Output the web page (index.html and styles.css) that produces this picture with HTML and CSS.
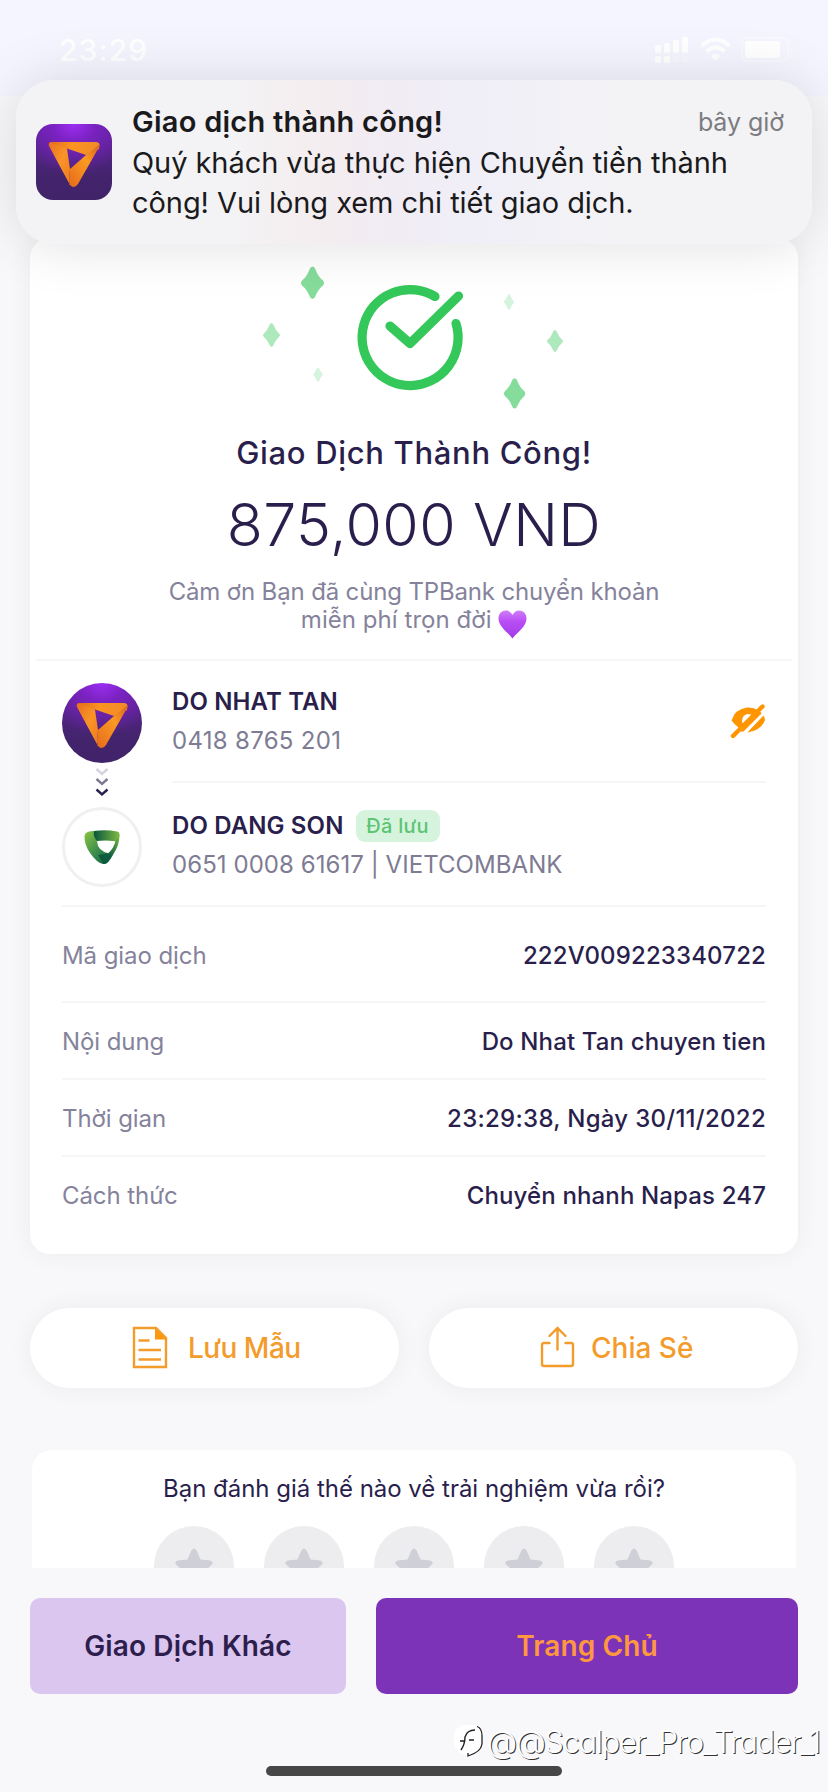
FILE: index.html
```html
<!DOCTYPE html>
<html lang="vi">
<head>
<meta charset="utf-8">
<title>Giao Dịch Thành Công</title>
<link rel="stylesheet" href="styles.css">
</head>
<body>
<svg class="defs" width="0" height="0" aria-hidden="true">
  <defs>
    <linearGradient id="o1" x1="0" y1="0" x2="1" y2="0"><stop offset="0" stop-color="#e0661d"/><stop offset=".45" stop-color="#fb9420"/><stop offset="1" stop-color="#f18a28"/></linearGradient>
    <linearGradient id="o2" x1="0" y1="0" x2="1" y2="1"><stop offset="0" stop-color="#e86f1e"/><stop offset=".5" stop-color="#fa9426"/><stop offset="1" stop-color="#ee7a20"/></linearGradient>
    <linearGradient id="o3" x1="1" y1="0" x2="0" y2="1"><stop offset="0" stop-color="#d9601f"/><stop offset=".4" stop-color="#fb9a22"/><stop offset="1" stop-color="#e56a1c"/></linearGradient>
    <linearGradient id="g1" x1="0" y1="0" x2="1" y2="1"><stop offset="0" stop-color="#8cc641"/><stop offset=".5" stop-color="#3f8f4c"/><stop offset="1" stop-color="#0a5a40"/></linearGradient>
    <linearGradient id="g2" x1="0" y1="0" x2="1" y2="0"><stop offset="0" stop-color="#07553c"/><stop offset="1" stop-color="#7fbb42"/></linearGradient>
    <linearGradient id="g3" x1="1" y1="0" x2="0" y2="1"><stop offset="0" stop-color="#7fbb42"/><stop offset=".6" stop-color="#0d5d40"/><stop offset="1" stop-color="#0a5a40"/></linearGradient>
    <symbol id="tp" viewBox="0 0 52 46">
      <path d="M1 4Q0 1 3.500 1H48Q51 1 51.500 3.500L51 8L38 14L19 7.500Z" fill="url(#o1)"/>
      <path d="M1 5Q0 1.500 3 1.500L19 7.500L22 28L21 43Q21 44 22 44Z" fill="url(#o2)"/>
      <path d="M51.500 3.500Q51.500 5 50.500 7L30 43Q27 47.500 23 45Q21 43 21 40L22 28L38 14Z" fill="url(#o3)"/>
    </symbol>
    <symbol id="star" viewBox="0 0 40 38"><path d="M20 1.500Q21.800 1.500 22.800 4L26.500 12.500L36 13.500Q40 14.500 38 17.500L30 24.500L32.500 34Q33 37.500 29 36.500L20 31.500L11 36.500Q7 37.500 7.500 34L10 24.500L2 17.500Q0 14.500 4 13.500L13.500 12.500L17.200 4Q18.200 1.500 20 1.500Z" fill="#cecfd7"/></symbol>
  </defs>
</svg>
<div class="screen">
  <header class="status">
    <span class="clock">23:29</span>
    <svg class="signals" width="146" height="30" viewBox="0 0 146 30" fill="#fff">
      <g><rect x="1" y="9" width="6" height="8" rx="1.500"/><rect x="10" y="7" width="6" height="10" rx="1.500"/><rect x="19" y="4" width="6" height="13" rx="1.500"/><rect x="28" y="1" width="6" height="16" rx="1.500"/><rect x="1" y="20" width="6" height="7" rx="1.500"/><rect x="10" y="20" width="6" height="7" rx="1.500"/><rect x="19" y="20" width="6" height="7" rx="1.500" opacity=".25"/><rect x="28" y="20" width="6" height="7" rx="1.500" opacity=".25"/></g>
      <g fill="none" stroke="#fff" stroke-width="4"><path d="M47.500 10Q61.500 -3 75.500 10"/><path d="M52.500 15.500Q61.500 7.500 70.500 15.500"/></g>
      <path d="M56.500 20Q61.500 16 66.500 20L61.500 25Z"/>
      <rect x="88" y="2" width="46" height="23" rx="6" fill="none" stroke="#fff" stroke-width="2" opacity=".35"/><rect x="91" y="5" width="35" height="17" rx="3"/><path d="M137 10Q140 13.500 137 17Z" opacity=".35"/>
    </svg>
  </header>

  <section class="notice">
    <div class="app-icon"><svg width="52" height="46"><use href="#tp"/></svg></div>
    <div class="notice-text">
      <div class="notice-head"><strong>Giao dịch thành công!</strong><time>bây giờ</time></div>
      <p>Quý khách vừa thực hiện Chuyển tiền thành<br>công! Vui lòng xem chi tiết giao dịch.</p>
    </div>
  </section>

  <main>
    <section class="card">
      <div class="hero">
        <svg class="success" width="390" height="160" viewBox="0 20 390 160">
          <g fill="none" stroke="#34c759" stroke-width="9.200" stroke-linecap="round" stroke-linejoin="round">
            <path d="M215 56.500A48 48 0 1 0 236 83.500"/><path d="M170 86L190 103.500L238.500 56"/>
          </g>
          <g fill="#86dc9a"><path d="M92.500 66.500Q94.500 66.500 95.500 69.500Q98 76.500 103 80.500Q105 83 103 85.500Q98 89.500 95.500 96Q94.500 99 92.500 99Q90.500 99 89.500 96Q87 89.500 82 85.500Q80 83 82 80.500Q87 76.500 89.500 69.500Q90.500 66.500 92.500 66.500Z" transform="translate(0 -40)"/>
          <path transform="translate(208.600 115.900) scale(.93)" d="M92.500 24Q94.500 24 95.500 27Q98 34 103 38Q105 40.500 103 43Q98 47 95.500 53.500Q94.500 56.500 92.500 56.500Q90.500 56.500 89.500 53.500Q87 47 82 43Q80 40.500 82 38Q87 34 89.500 27Q90.500 24 92.500 24Z"/></g>
          <g fill="#aee8bd"><path d="M51.500 83Q53 83 54 86Q56 91 59 93.500Q61 95 59 97Q56 99.500 54 104Q53 107 51.500 107Q50 107 49 104Q47 99.500 44 97Q42 95 44 93.500Q47 91 49 86Q50 83 51.500 83Z"/><path d="M335 90Q336.500 90 337.500 93Q339 97 342 99.500Q344 101 342 103Q339 105.500 337.500 109Q336.500 112 335 112Q333.500 112 332.500 109Q331 105.500 328 103Q326 101 328 99.500Q331 97 332.500 93Q333.500 90 335 90Z"/></g>
          <g fill="#d6f4dd"><path d="M69 54Q70 54 71 57Q72.500 60 74.500 62Q72.500 64 71 67Q70 70 69 70Q68 70 67 67Q65.500 64 63.500 62Q65.500 60 67 57Q68 54 69 54Z" transform="translate(220 0)"/><path d="M98 127.500Q99 127.500 100 130Q101 132.500 103 134.500Q101 136.500 100 139Q99 142 98 142Q97 142 96 139Q95 136.500 93 134.500Q95 132.500 96 130Q97 127.500 98 127.500Z"/></g>
        </svg>
        <h1>Giao Dịch Thành Công!</h1>
        <div class="amount">875,000 VND</div>
        <p class="thanks">Cảm ơn Bạn đã cùng TPBank chuyển khoản<br><span class="second">miễn phí trọn đời</span>
          <svg class="heart" width="29" height="29" viewBox="0 0 28 29"><defs><linearGradient id="h" x1="0" y1="0" x2="0" y2="1"><stop offset="0" stop-color="#d07df8"/><stop offset=".4" stop-color="#b84df5"/><stop offset="1" stop-color="#a23ce6"/></linearGradient></defs><path d="M14 28.500C9 22 0 16.500 0 8.500C0 0 10 -2.500 14 5C18 -2.500 28 0 28 8.500C28 16.500 19 22 14 28.500Z" fill="url(#h)"/></svg></p>
      </div>

      <div class="transfer">
        <div class="route">
          <div class="avatar tp"><svg width="52" height="46"><use href="#tp"/></svg></div>
          <svg class="chevrons" width="14" height="30" viewBox="0 0 14 30" fill="none" stroke-width="2.400"><path d="M1.500 1L7 6L12.500 1" stroke="#d5d4de"/><path d="M1.500 11L7 16L12.500 11" stroke="#7c7a92"/><path d="M1.500 21.500L7 26.500L12.500 21.500" stroke="#2a1f4c"/></svg>
          <div class="avatar vcb"><svg width="36" height="35" viewBox="0 0 36 35"><path d="M10 1L13 11Q13.500 21 25 23.500L28 25Q24 35 19 34Q13 33 6 23Q0 14 .5 6Q1 1 10 1Z" fill="url(#g1)"/><path d="M10 1Q22 -.5 33 1.500Q36 2 35.500 6L33 12Q30 10.500 22 10.500Q16 10.500 13 11Q9 7 10 1Z" fill="url(#g2)"/><path d="M35.500 5Q35.500 15 29.500 24Q24 34.500 19.500 34L14 25L24 23.500Q30 18 31.500 11Z" fill="url(#g3)"/></svg></div>
        </div>
        <div class="parties">
          <div class="party">
            <div><div class="name"><b>DO NHAT TAN</b></div><div class="account spaced">0418 8765 201</div></div>
            <svg class="eye" width="36" height="36" viewBox="0 0 36 36"><path d="M7 27.500L9 25Q4 21 1.500 17.500Q5 6 17 4.500Q23 4 28 7Q34 11 35 17Q31 28 17 29.500Z" fill="#ff9500"/><path d="M12 18Q12 12 18 11Q21 11 23 12.500L14 22Q12 20 12 18Z" fill="#fff"/><path d="M7 35L36 6V10L13 34Z" fill="#fff"/><path d="M3 33L32.500 3.500" stroke="#ff9500" stroke-width="4.400" stroke-linecap="round"/></svg>
          </div>
          <div class="party">
            <div><div class="name"><b>DO DANG SON</b><span class="badge">Đã lưu</span></div><div class="account">0651 0008 61617 | VIETCOMBANK</div></div>
          </div>
        </div>
      </div>

      <dl class="details">
        <div class="row first"><dt>Mã giao dịch</dt><dd>222V009223340722</dd></div>
        <div class="row"><dt>Nội dung</dt><dd>Do Nhat Tan chuyen tien</dd></div>
        <div class="row"><dt>Thời gian</dt><dd class="wide">23:29:38, Ngày 30/11/2022</dd></div>
        <div class="row"><dt>Cách thức</dt><dd>Chuyển nhanh Napas 247</dd></div>
      </dl>
    </section>

    <div class="pills">
      <button class="pill save"><svg width="36" height="44" viewBox="0 0 36 44" fill="none" stroke="#f39c2b" stroke-width="2.400"><path d="M2 2H24L34 12V41H2Z"/><path d="M23 2V13.500H34.500Z" fill="#fb980f" stroke="none"/><path d="M6.500 14.500H17.500M6.500 24H29M6.500 33.500H29"/></svg><span>Lưu Mẫu</span></button>
      <button class="pill share"><svg width="36" height="44" viewBox="0 0 36 44" fill="none" stroke="#f39c2b" stroke-width="2.400" stroke-linecap="round"><path d="M9.500 17H4Q2 17 2 19V38Q2 40 4 40H31Q33 40 33 38V19Q33 17 31 17H25.500M17.500 23.500V2.500M9.500 10L17.500 2L25.500 10"/></svg><span>Chia Sẻ</span></button>
    </div>

    <section class="rating">
      <h2>Bạn đánh giá thế nào về trải nghiệm vừa rồi?</h2>
      <div class="stars">
        <span class="star"><svg width="40" height="38"><use href="#star"/></svg></span>
        <span class="star"><svg width="40" height="38"><use href="#star"/></svg></span>
        <span class="star"><svg width="40" height="38"><use href="#star"/></svg></span>
        <span class="star"><svg width="40" height="38"><use href="#star"/></svg></span>
        <span class="star"><svg width="40" height="38"><use href="#star"/></svg></span>
      </div>
    </section>
  </main>

  <footer class="actions">
    <button class="btn other">Giao Dịch Khác</button>
    <button class="btn home">Trang Chủ</button>
  </footer>
  <div class="home-bar"></div>
  <div class="handle">
    <svg width="31" height="34" viewBox="0 0 31 34"><path d="M11 1H20Q29 1 29 11V20Q29 29 16 32Q1 30 1 17Q0 3 11 1Z" fill="#fff"/><path d="M24 2.500Q29 4 29 12V20Q28 28 15 32V29" fill="none" stroke="#222" stroke-width="1.300"/><path d="M8 26Q12 20 12 13Q14 6 22 6M7 17H12M16 16H21" fill="none" stroke="#222" stroke-width="1.400"/></svg>
    <span>@@Scalper_Pro_Trader_1</span>
  </div>
</div>
</body>
</html>
```
FILE: styles.css
```css
* { box-sizing: border-box; }
body { margin: 0; background: #f8f8fa; font-family: Inter, "Noto Sans", sans-serif; color: #2a1f4c; }
h1, h2, p, dl, dd { margin: 0; font-weight: inherit; }
button { border: 0; font: inherit; letter-spacing: inherit; color: inherit; padding: 0; }
svg { display: block; flex: none; }
.defs { position: absolute; }
.screen { position: relative; width: 828px; height: 1792px; overflow: hidden; white-space: nowrap; }

.status { height: 96px; padding: 0 28px 0 59px; display: flex; justify-content: space-between; align-items: flex-start; background: #f5f5ff; color: #fff; }
.clock { font-size: 30px; line-height: 40px; font-weight: 500; letter-spacing: 1.1px; padding-top: 30px; }
.signals { margin-top: 36px; }

.notice { position: absolute; z-index: 2; left: 16px; top: 80px; width: 796px; height: 164px; border-radius: 38px; padding: 22px 28px 0 20px; display: flex; gap: 20px;
  background: linear-gradient(90deg, #f3f3f6 0%, #f3f2f4 28%, #f4eeef 36%, #f2ecf3 45%, #f0eef7 56%, #f3f3f6 76%); box-shadow: 0 0 56px rgba(0,0,0,.13); color: #1a1a1c; }
.app-icon { width: 76px; height: 76px; margin-top: 22px; border-radius: 17px; display: flex; justify-content: center; padding-top: 17px; flex: none; }
.app-icon, .tp { background: radial-gradient(ellipse 75% 65% at 50% 0, #9c2df2 0%, #7a22c0 38%, rgba(80,30,130,0) 100%), linear-gradient(#5e2399, #43246c 70%, #41236a); }
.notice-text { flex: 1; font-size: 29px; line-height: 40px; letter-spacing: -.07px; }
.notice-head { display: flex; justify-content: space-between; height: 41px; }
.notice-head strong { font-weight: 600; letter-spacing: .25px; }
.notice-head time { font-size: 25px; color: #7c7c80; }

.card { margin: 142px 30px 0; height: 1016px; border-radius: 20px; background: #fff; box-shadow: 0 0 26px rgba(30,30,60,.055); }
.hero { margin: 0 6px; height: 423px; padding-top: 22px; border-bottom: 2px solid #f6f6f8; text-align: center; }
.success { margin-left: 184px; }
h1 { margin-top: 13px; font-size: 31px; line-height: 40px; font-weight: 500; letter-spacing: .68px; }
.amount { margin-top: 20px; font-size: 59px; line-height: 64px; font-weight: 300; letter-spacing: .4px; }
.thanks { margin-top: 21px; font-size: 24px; line-height: 28px; letter-spacing: -.15px; color: #85839b; }
.second { letter-spacing: .05px; }
.heart { display: inline-block; vertical-align: -7px; margin: -4px 0; }

.transfer { margin: 0 32px; display: flex; gap: 30px; height: 246px; border-bottom: 2px solid #f6f6f8; }
.route { width: 80px; padding-top: 22px; display: flex; flex-direction: column; align-items: center; }
.avatar { width: 80px; height: 80px; border-radius: 50%; display: flex; justify-content: center; }
.tp { padding-top: 19px; }
.vcb { border: 3px solid #f0f0f0; padding-top: 20px; }
.chevrons { margin: 5px 0 9px; }
.parties { flex: 1; }
.party { display: flex; justify-content: space-between; height: 122px; padding: 21px 0 0; border-bottom: 2px solid #f6f6f8; }
.party:last-child { padding-top: 23px; border: 0; }
.name { display: flex; align-items: center; font-size: 24px; line-height: 40px; }
.name b { font-weight: 600; letter-spacing: .12px; }
.account { font-size: 24px; line-height: 38px; letter-spacing: .06px; color: #7e7c93; }
.spaced { letter-spacing: .3px; }
.badge { margin: -1px 0 0 12px; width: 84px; height: 32px; line-height: 32px; border-radius: 9px; background: #d6f4dd; color: #5cc472; font-size: 20px; font-weight: 500; letter-spacing: .3px; text-align: center; }
.eye { margin-top: 21px; }

.details { margin: 0 32px; font-size: 24px; }
.row { height: 77px; display: flex; justify-content: space-between; align-items: center; padding-top: 1px; border-bottom: 2px solid #f6f6f8; }
.row.first { height: 96px; padding-top: 3px; }
.row:last-child { border: 0; height: 76px; }
dt { color: #85839b; letter-spacing: -.08px; }
dd { font-weight: 500; letter-spacing: .14px; }
.wide { letter-spacing: .28px; }

.pills { margin: 54px 30px 0; display: grid; grid-template-columns: 1fr 1fr; gap: 30px; }
.pill { height: 80px; border-radius: 40px; background: #fff; box-shadow: 0 0 26px rgba(30,30,60,.055); display: flex; align-items: center; color: #f39c2b; font-size: 28px; font-weight: 500; }
.save { padding-left: 102px; gap: 20px; letter-spacing: -.5px; }
.share { padding-left: 111px; gap: 15px; }

.rating { margin: 62px 32px 0; height: 118px; overflow: hidden; border-radius: 20px 20px 0 0; background: #fff; text-align: center; padding-top: 19px; }
h2 { font-size: 24px; line-height: 40px; letter-spacing: -.02px; }
.stars { margin: 17px 0 0 122px; display: flex; gap: 30px; }
.star { width: 80px; height: 80px; flex: none; border-radius: 50%; background: #ededef; padding: 21px 20px; }

.actions { margin: 30px 30px 0; display: grid; grid-template-columns: 316px 422px; gap: 30px; font-size: 28px; font-weight: 600; letter-spacing: .12px; }
.btn { height: 96px; border-radius: 10px; }
.other { background: #dac6ee; color: #2e1e4e; }
.home { background: #7d33b8; color: #fd9840; }
.home-bar { width: 296px; height: 10px; margin: 72px 0 0 266px; border-radius: 5px; background: #474747; }
.handle { position: absolute; left: 453px; top: 1721px; display: flex; align-items: center; gap: 3px; height: 40px; color: #fff; font-size: 31px; font-weight: 300; letter-spacing: -1.42px; font-feature-settings: "cv11"; text-shadow: 1px 1px 0 #333; }
```
